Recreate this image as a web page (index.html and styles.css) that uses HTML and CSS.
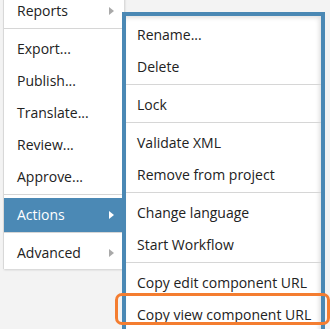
FILE: index.html
```html
<!DOCTYPE html>
<html lang="en">
<head>
  <meta charset="UTF-8">
  <title>Context menu</title>
  <link rel="stylesheet" href="styles.css">
</head>
<body>

  <ul class="menu main-menu">
    <li class="item has-sub">Reports</li>
    <li class="sep"></li>
    <li class="item">Export...</li>
    <li class="item">Publish...</li>
    <li class="item">Translate...</li>
    <li class="item">Review...</li>
    <li class="item">Approve...</li>
    <li class="sep"></li>
    <li class="item has-sub active">Actions</li>
    <li class="sep"></li>
    <li class="item has-sub">Advanced</li>
  </ul>

  <div class="sub-frame">
    <ul class="menu sub-menu">
      <li class="item">Rename...</li>
      <li class="item">Delete</li>
      <li class="sep"></li>
      <li class="item">Lock</li>
      <li class="sep"></li>
      <li class="item">Validate XML</li>
      <li class="item">Remove from project</li>
      <li class="sep"></li>
      <li class="item">Change language</li>
      <li class="item">Start Workflow</li>
      <li class="sep"></li>
      <li class="item">Copy edit component URL</li>
      <li class="item">Copy view component URL</li>
    </ul>
  </div>

  <div class="highlight"></div>

</body>
</html>
```

FILE: styles.css
```css
html {
  overflow: hidden;
}

body {
  margin: 0;
  padding: 0;
  background-color: #f3f3f3;
  font-family: 'Open Sans', 'DejaVu Sans', sans-serif;
  font-size: 14px;
  color: #222;
  height: 329px;
  overflow: hidden;
  position: relative;
}

.menu {
  list-style: none;
  margin: 0;
  padding: 0;
  background-color: #fff;
}

.item {
  height: 32px;
  line-height: 32px;
  white-space: nowrap;
  position: relative;
}

.sep {
  height: 1px;
  background-color: #d6d6d6;
  margin: 1px 0 4px 0;
}

/* left menu */
.main-menu {
  position: absolute;
  left: 3px;
  top: -5px;
  width: 120px;
  border-left: 1px solid #d8d8d8;
  box-shadow: 1px 1px 2px rgba(0,0,0,0.15);
}

.main-menu .item {
  padding-left: 13px;
}

.has-sub::after {
  content: "";
  position: absolute;
  right: 10px;
  top: 12px;
  border-top: 4px solid transparent;
  border-bottom: 4px solid transparent;
  border-left: 5px solid #a9a9a9;
}

.main-menu .active {
  background-color: #4b89b5;
  color: #fff;
  height: 34px;
  line-height: 34px;
  margin-top: -1px;
  margin-bottom: -1px;
}

.main-menu .active::after {
  border-left-color: #fff;
  top: 13px;
}

/* submenu with blue frame */
.sub-frame {
  position: absolute;
  left: 122px;
  top: 12px;
  width: 195px;
  height: 313px;
  border: 4px solid #4a88b4;
  border-bottom: none;
  background-color: #fff;
  overflow: hidden;
}

.sub-menu {
  padding-top: 3px;
  box-shadow: inset -2px 2px 4px rgba(0,0,0,0.12);
  height: 100%;
}

.sub-menu .item {
  padding-left: 11px;
}

.highlight {
  position: absolute;
  left: 115px;
  top: 293px;
  width: 209px;
  height: 26px;
  border: 3px solid #f47d30;
  border-radius: 7px;
}
```
